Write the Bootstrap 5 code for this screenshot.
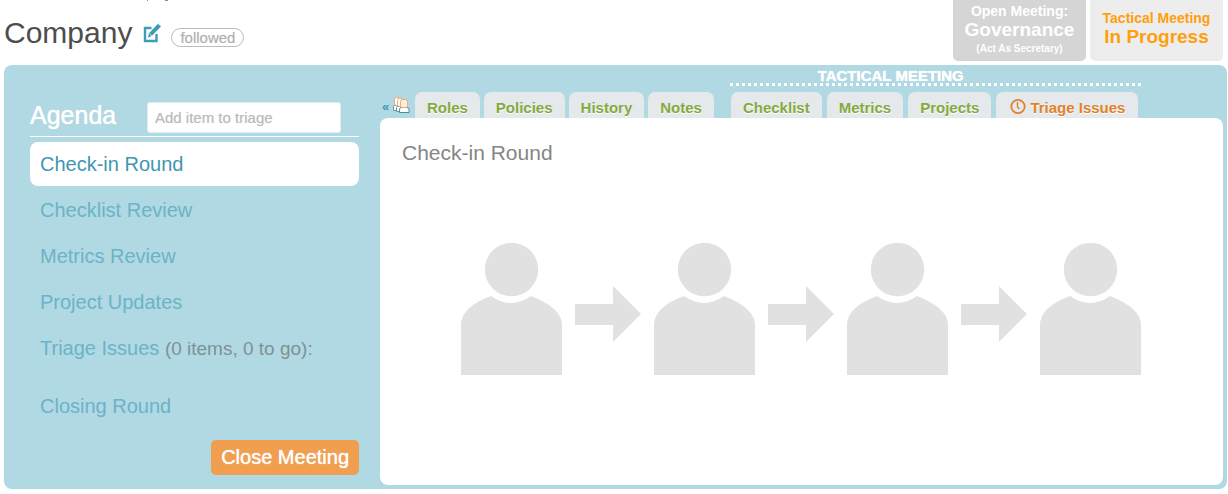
<!DOCTYPE html>
<html lang="en">
<head>
<meta charset="utf-8">
<meta name="viewport" content="width=device-width, initial-scale=1">
<title>Company</title>
<link href="https://cdn.jsdelivr.net/npm/bootstrap@5.3.0/dist/css/bootstrap.min.css" rel="stylesheet">
<style>
body{font-family:"Liberation Sans",Arial,sans-serif;background:#fff;color:#4d4d4d;font-size:15px;line-height:20px}
a{text-decoration:none}
.topbar{min-height:65px;padding:0 5px 0 4px}
.stray-marks{position:absolute;top:0;left:147px}
.title-row{padding-top:15px}
.circle-name{font-size:30px;line-height:36px}
.edit-link{margin:0 10px 0 9px}
.followed-pill{border:1px solid #bbb;border-radius:10px;color:#b0b0b0;line-height:17px;padding:0 8px;background:#fff;margin-top:8px;text-shadow:0 0 1px #ddd}
.meeting-box{width:133px;height:61px;border:0;border-radius:0 0 5px 5px;font-weight:bold;font-size:14px;line-height:18px;padding:2px 0 0}
.meeting-box .kind{font-size:19px;line-height:20px}
.meeting-box .role{font-size:10px;line-height:18px}
.open-box{background:#d5d5d5;color:#fff}
.live-box{background:#ededed;color:#ff9f0c;padding:0 0 6px}
.board{background:#b1d9e3;border-radius:8px;margin:0 1px 5px 4px;padding:0 4px 4px 26px}
.agenda{width:329px;margin-right:21px;padding-top:37px}
.agenda-head{border-bottom:1px solid #fff;height:35px;margin-bottom:5px}
.agenda-title{font-size:25px;line-height:27px;color:#fff;text-shadow:0 0 1px #fff;width:117px}
.agenda-list{row-gap:2px}
.triage-input{width:194px;height:31px;padding:0 7px;border:1px solid #e2eef1;border-radius:3px;font-size:15px;background:#fff}
.triage-input::placeholder{color:#bababa;opacity:1;text-shadow:0 0 1px #ddd}
.agenda-item{display:block;height:44px;line-height:44px;padding:0 10px;border-radius:8px;font-size:20px;color:#6bb3c7}
.agenda-item.current{background:#fff;color:#3f96b1}
.agenda-item .count{color:#7f9196;font-size:19px}
.closing{margin-top:12px}
.close-btn{background:#f09f50;color:#fff;font-size:20px;line-height:35px;border:0;border-radius:5px;padding:0 10px;text-shadow:0 0 1px #fff}
.tabrow{min-height:53px}
.people-link{width:35px;height:26px;padding:5px 5px 0 2px}
.people-link .arrows{color:#3f96b1;font-size:13px;font-weight:bold}
.tab-link{background:#e5e9ec;border-radius:7px 7px 0 0;height:26px;line-height:31px;padding:0 12px;font-weight:bold;color:#84aa3e;text-shadow:0 1px 0 #fff}
.tab-link.triage{color:#e0822a;padding:0 13px}
.tactical{margin-left:14px;padding:0 3px}
.tactical-tabs{gap:5px}
.tactical-title{color:#fff;font-weight:bold;line-height:20px;padding-right:88px;text-shadow:0 0 1px #fff}
.dots{height:3px;margin:-3px -3px 6px -1px;background:repeating-linear-gradient(90deg,#fff 0 3px,transparent 3px 6px)}
.round-panel{background:#fff;border-radius:8px;padding:22px 0 110px 22px}
.round-title{font-size:21px;line-height:26px;color:#858585}
.people-flow{margin:77px 0 0 59px;gap:13px}
.people-flow svg{fill:#e1e1e1;flex:none}
.flow-arrow{margin-top:10px}
</style>
</head>
<body>
<header class="topbar d-flex justify-content-between align-items-start">
  <svg class="stray-marks" width="22" height="1" aria-hidden="true"><path d="M0 0h1v1h-1z" fill="#7c9c90"/><path d="M18 0h3v1h-3z" fill="#4fa3bd"/></svg>
  <div class="title-row d-flex align-items-center">
    <h1 class="circle-name fw-normal mb-0">Company</h1>
    <a class="edit-link d-flex" href="#" aria-label="Edit">
      <svg width="20" height="20" viewBox="0 0 20 20"><path d="M10.500 5H4v13h11.500V11" fill="none" stroke="#3f9cb8" stroke-width="2.400"/><path d="M17 .8 20 3.600 11 12.800 6.800 14.800 8 10.300z" fill="#3f9cb8"/><path d="M8.800 10.800l2 2" stroke="#fff" stroke-width=".8"/></svg>
    </a>
    <button class="followed-pill" type="button">followed</button>
  </div>
  <div class="d-flex gap-1">
    <button class="meeting-box open-box d-flex flex-column align-items-center" type="button"><span>Open Meeting:</span><span class="kind">Governance</span><span class="role">(Act As Secretary)</span></button>
    <button class="meeting-box live-box d-flex flex-column align-items-center justify-content-center" type="button"><span>Tactical Meeting</span><span class="kind">In Progress</span></button>
  </div>
</header>

<main class="board d-flex align-items-stretch">
  <aside class="agenda flex-shrink-0">
    <div class="agenda-head d-flex align-items-start">
      <h2 class="agenda-title fw-normal mb-0">Agenda</h2>
      <input class="triage-input" type="text" aria-label="Add item to triage" placeholder="Add item to triage">
    </div>
    <nav class="agenda-list d-grid" aria-label="Agenda">
      <a class="agenda-item current" href="#">Check-in Round</a>
      <a class="agenda-item" href="#">Checklist Review</a>
      <a class="agenda-item" href="#">Metrics Review</a>
      <a class="agenda-item" href="#">Project Updates</a>
      <a class="agenda-item" href="#">Triage Issues <span class="count">(0 items, 0 to go):</span></a>
      <a class="agenda-item closing" href="#">Closing Round</a>
    </nav>
    <div class="d-flex justify-content-end pt-2 mt-1">
      <button class="close-btn" type="button">Close Meeting</button>
    </div>
  </aside>

  <section class="flex-grow-1 d-flex flex-column">
    <div class="tabrow d-flex align-items-end">
      <a class="people-link d-flex justify-content-between" href="#" aria-label="People">
        <span class="arrows">«</span>
        <svg width="17" height="17" viewBox="0 0 17 17"><g fill="#fff" stroke-width="1"><path d="M.5 13.500V9.500q0-1 1-1h7v5z" stroke="#5f9a9a"/><rect x="1.500" y=".5" width="6" height="8" rx="2" stroke="#eda873"/><path d="M3.500 14.500v-4q0-1 1-1h7v5z" stroke="#5f9a9a"/><rect x="4.500" y="1.500" width="6" height="8" rx="2" stroke="#eda873"/><path d="M6.500 15.500v-3q0-2 2-2h5q2.500 0 2.500 2v3z" stroke="#4c8c90"/><rect x="7.500" y="2.500" width="7" height="8" rx="2" fill="#fdeedd" stroke="#eda873"/></g></svg>
      </a>
      <nav class="d-flex gap-1">
        <a class="tab-link" href="#">Roles</a><a class="tab-link" href="#">Policies</a><a class="tab-link" href="#">History</a><a class="tab-link" href="#">Notes</a>
      </nav>
      <div class="tactical">
        <div class="tactical-title text-center">TACTICAL MEETING</div>
        <div class="dots"></div>
        <nav class="tactical-tabs d-flex">
          <a class="tab-link" href="#">Checklist</a><a class="tab-link" href="#">Metrics</a><a class="tab-link" href="#">Projects</a>
          <a class="tab-link triage d-flex" href="#"><svg class="flex-shrink-0 mt-1 me-1" width="17" height="21" viewBox="0 0 17 21"><circle cx="9" cy="10.500" r="6.700" fill="none" stroke="#e0822a" stroke-width="1.800"/><path d="M8.500 6v5l2 2" fill="none" stroke="#e0822a" stroke-width="1.400"/></svg>Triage Issues</a>
        </nav>
      </div>
    </div>
    <div class="round-panel flex-grow-1">
      <h3 class="round-title fw-normal mb-0">Check-in Round</h3>
      <div class="people-flow d-flex align-items-center" role="img" aria-label="Each person in turn">
        <svg width="101" height="132" viewBox="0 0 101 132"><circle cx="50.500" cy="26.500" r="26.700"/><path d="M30 53Q50 67 70 53Q101 65 101 82V132H0V82Q0 64 30 53z"/></svg>
        <svg class="flow-arrow" width="66" height="56" viewBox="0 0 66 56"><path d="M0 18h38V0l28 28-28 28V39H0z"/></svg>
        <svg width="101" height="132" viewBox="0 0 101 132"><circle cx="50.500" cy="26.500" r="26.700"/><path d="M30 53Q50 67 70 53Q101 65 101 82V132H0V82Q0 64 30 53z"/></svg>
        <svg class="flow-arrow" width="66" height="56" viewBox="0 0 66 56"><path d="M0 18h38V0l28 28-28 28V39H0z"/></svg>
        <svg width="101" height="132" viewBox="0 0 101 132"><circle cx="50.500" cy="26.500" r="26.700"/><path d="M30 53Q50 67 70 53Q101 65 101 82V132H0V82Q0 64 30 53z"/></svg>
        <svg class="flow-arrow" width="66" height="56" viewBox="0 0 66 56"><path d="M0 18h38V0l28 28-28 28V39H0z"/></svg>
        <svg width="101" height="132" viewBox="0 0 101 132"><circle cx="50.500" cy="26.500" r="26.700"/><path d="M30 53Q50 67 70 53Q101 65 101 82V132H0V82Q0 64 30 53z"/></svg>
      </div>
    </div>
  </section>
</main>
<script src="https://cdn.jsdelivr.net/npm/bootstrap@5.3.0/dist/js/bootstrap.bundle.min.js"></script>
</body>
</html>
